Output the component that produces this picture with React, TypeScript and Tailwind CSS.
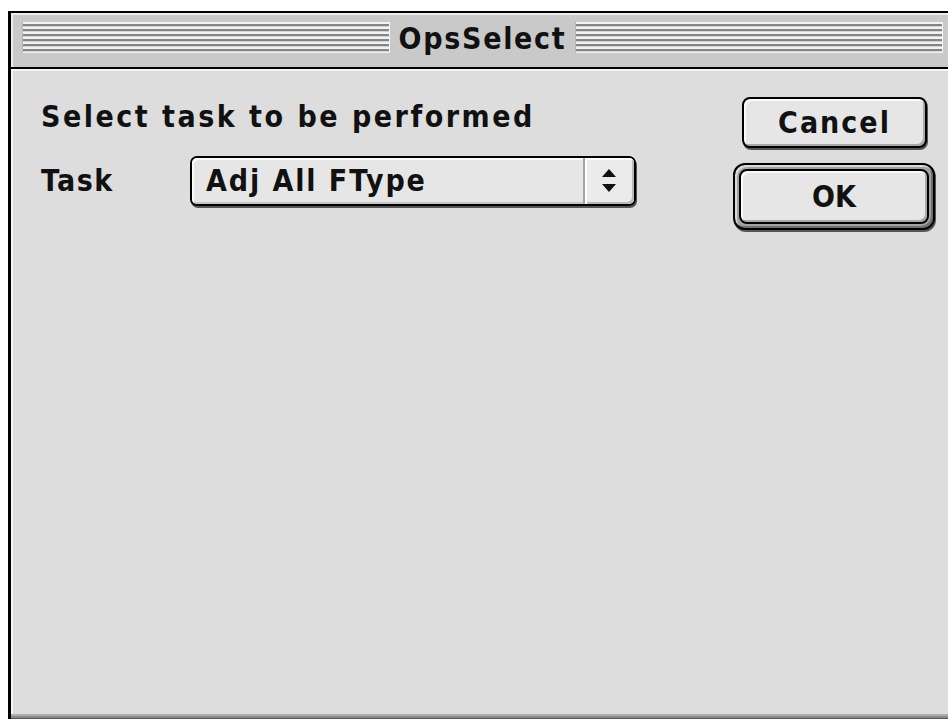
import React from "react";

const chicago =
  "font-['DejaVu_Sans_Condensed','DejaVu_Sans',sans-serif] font-bold font-stretch-condensed text-[#111111]";

function Stripes() {
  return (
    <div className="flex-1 h-[31px] mt-[9px] bg-[repeating-linear-gradient(to_bottom,#f2f2f2_0px,#f2f2f2_2px,#858585_2px,#858585_4px,#d4d4d4_4px,#d4d4d4_5px)] shadow-[inset_1px_0_0_#b5b5b5,inset_-1px_0_0_#f5f5f5]" />
  );
}

function PopupArrows() {
  return (
    <svg width="14" height="24" viewBox="0 0 14 24" className="block">
      <polygon points="7,0 14,8 0,8" fill="#111" />
      <polygon points="0,15 14,15 7,23" fill="#111" />
    </svg>
  );
}

export default function App() {
  return (
    <div className={`w-[948px] h-[719px] overflow-hidden bg-white pt-[11px] pl-[8px] ${chicago}`}>
      <div className="w-[946px] h-[720px] border-l-[3px] border-t-[2px] border-black bg-[#dddddd] flex flex-col">
        {/* title bar */}
        <div className="h-[56px] shrink-0 bg-[#c9c9c9] border-b-2 border-black flex items-start px-[11px] shadow-[inset_2px_2px_0_#ececec]">
          <Stripes />
          <div className="px-[9px] pt-[11px] text-[30px] leading-[30px] tracking-[1.7px]">OpsSelect</div>
          <Stripes />
        </div>

        {/* dialog body */}
        <div className="h-[645px] shrink-0 flex shadow-[inset_2px_2px_0_#f6f6f6]">
          <div className="w-[722px] pl-[30px] pt-[33px]">
            <div className="text-[30px] leading-[30px] tracking-[2.5px]">Select task to be performed</div>
            <div className="flex items-center mt-[24px]">
              <div className="w-[149px] text-[30px] leading-[30px] tracking-[1.5px]">Task</div>
              <div className="w-[446px] h-[50px] flex rounded-[7px] border-2 border-black bg-[#e6e6e6] shadow-[1px_2px_0_#555555]">
                <div className="flex-1 flex items-center pl-[14px] text-[30px] leading-[30px] tracking-[1.9px] rounded-l-[5px] shadow-[inset_2px_2px_0_#fafafa,inset_0_-2px_0_#c4c4c4]">
                  Adj All FType
                </div>
                <div className="w-[51px] flex items-center justify-center pr-[2px] border-l-2 border-[#a4a4a4] bg-[#ebebeb] rounded-r-[5px] shadow-[inset_2px_2px_0_#ffffff,inset_-2px_-2px_0_#b9b9b9]">
                  <PopupArrows />
                </div>
              </div>
            </div>
          </div>

          <div className="pt-[28px] flex flex-col">
            <div className="ml-[9px] w-[185px] h-[51px] rounded-[8px] border-2 border-black bg-[#e6e6e6] shadow-[inset_2px_2px_0_#fbfbfb,inset_-2px_-2px_0_#a9a9a9,1px_2px_0_#555555] flex items-center justify-center text-[30px] leading-[30px] tracking-[2px]">
              Cancel
            </div>
            <div className="mt-[15px] w-[202px] h-[67px] rounded-[12px] border-2 border-black bg-[#a2a2a2] p-[4px] shadow-[inset_2px_2px_0_#d9d9d9,inset_-2px_-2px_0_#6f6f6f,1px_2px_0_#555555]">
              <div className="w-full h-full rounded-[8px] border-2 border-black bg-[#e6e6e6] shadow-[inset_2px_2px_0_#fbfbfb,inset_-2px_-2px_0_#a9a9a9] flex items-center justify-center text-[30px] leading-[30px] tracking-[0px]">
                OK
              </div>
            </div>
          </div>
        </div>

        {/* bottom edge of the window frame */}
        <div className="h-[2px] shrink-0 bg-[#adadad]" />
        <div className="h-[2px] shrink-0 bg-[#8a8a8a]" />
        <div className="h-[2px] shrink-0 bg-[#555555]" />
      </div>
    </div>
  );
}
